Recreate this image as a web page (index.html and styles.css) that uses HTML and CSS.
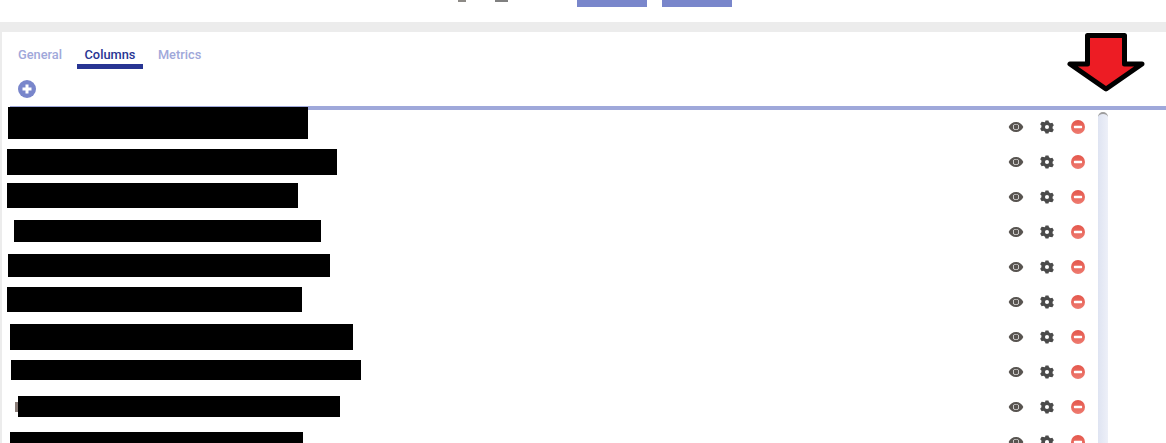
FILE: index.html
```html
<!DOCTYPE html>
<html lang="en">
	<head>
		<meta name="viewport" content="width=device-width, initial-scale=1.0" />
		<title>Columns</title>
		<link rel="stylesheet" href="styles.css">
	</head>
	<body>
		<svg class="defs" aria-hidden="true">
			<symbol id="icon-eye" viewBox="0 0 24 24">
				<path fill-rule="evenodd" d="M12 4.500C7 4.500 2.730 7.610 1 12c1.730 4.390 6 7.500 11 7.500s9.270-3.110 11-7.500c-1.730-4.390-6-7.500-11-7.500zM12 7.400a4.600 4.600 0 1 0 0 9.200 4.600 4.600 0 0 0 0-9.200zM12 8.300a3.700 3.700 0 1 1 0 7.400 3.700 3.700 0 0 1 0-7.400z" />
			</symbol>
			<symbol id="icon-cog" viewBox="0 0 24 24">
				<path fill-rule="evenodd" d="M9.500 1h5l1 3 2.600 1.500 3.100-.7 2.500 4.400-2.100 2.300v3l2.100 2.300-2.500 4.400-3.100-.7L15.500 20l-1 3h-5l-1-3-2.600-1.500-3.100.7-2.500-4.400 2.100-2.300v-3L.3 7.200l2.500-4.400 3.100.7L8.500 4zM12 8.500a3.500 3.500 0 1 0 0 7 3.500 3.500 0 0 0 0-7z" />
			</symbol>
			<linearGradient id="remove-fill" x1="0" y1="0" x2="0" y2="1">
				<stop offset="0" stop-color="#e4574c" />
				<stop offset="1" stop-color="#ee7b70" />
			</linearGradient>
			<symbol id="icon-remove" viewBox="0 0 24 24">
				<circle cx="12" cy="12" r="12" fill="url(#remove-fill)" />
				<rect x="5" y="10" width="14" height="4" rx="1" fill="#fff" />
			</symbol>
		</svg>

		<header class="topbar">
			<span class="stub -dot"></span>
			<span class="stub -square"></span>
			<span class="stub -button"></span>
			<span class="stub -button"></span>
		</header>

		<main class="panel">
			<nav class="tabs">
				<a class="tab">General</a>
				<a class="tab -active">Columns</a>
				<a class="tab">Metrics</a>
			</nav>

			<button type="button" class="add-button" aria-label="Add column">
				<svg viewBox="0 0 18 18" width="18" height="18">
					<circle cx="9" cy="9" r="9" fill="#7986cb" />
					<path d="M9 4.500v9M4.500 9h9" stroke="#fff" stroke-width="3" />
				</svg>
			</button>

			<section class="list">
				<div class="rows">
					<div class="row">
						<span class="redacted bar-1"></span>
						<span class="actions">
							<svg class="icon -eye"><use href="#icon-eye" /></svg>
							<svg class="icon -cog"><use href="#icon-cog" /></svg>
							<svg class="icon -remove"><use href="#icon-remove" /></svg>
						</span>
					</div>
					<div class="row">
						<span class="redacted bar-2"></span>
						<span class="actions">
							<svg class="icon -eye"><use href="#icon-eye" /></svg>
							<svg class="icon -cog"><use href="#icon-cog" /></svg>
							<svg class="icon -remove"><use href="#icon-remove" /></svg>
						</span>
					</div>
					<div class="row">
						<span class="redacted bar-3"></span>
						<span class="actions">
							<svg class="icon -eye"><use href="#icon-eye" /></svg>
							<svg class="icon -cog"><use href="#icon-cog" /></svg>
							<svg class="icon -remove"><use href="#icon-remove" /></svg>
						</span>
					</div>
					<div class="row">
						<span class="redacted bar-4"></span>
						<span class="actions">
							<svg class="icon -eye"><use href="#icon-eye" /></svg>
							<svg class="icon -cog"><use href="#icon-cog" /></svg>
							<svg class="icon -remove"><use href="#icon-remove" /></svg>
						</span>
					</div>
					<div class="row">
						<span class="redacted bar-5"></span>
						<span class="actions">
							<svg class="icon -eye"><use href="#icon-eye" /></svg>
							<svg class="icon -cog"><use href="#icon-cog" /></svg>
							<svg class="icon -remove"><use href="#icon-remove" /></svg>
						</span>
					</div>
					<div class="row">
						<span class="redacted bar-6"></span>
						<span class="actions">
							<svg class="icon -eye"><use href="#icon-eye" /></svg>
							<svg class="icon -cog"><use href="#icon-cog" /></svg>
							<svg class="icon -remove"><use href="#icon-remove" /></svg>
						</span>
					</div>
					<div class="row">
						<span class="redacted bar-7"></span>
						<span class="actions">
							<svg class="icon -eye"><use href="#icon-eye" /></svg>
							<svg class="icon -cog"><use href="#icon-cog" /></svg>
							<svg class="icon -remove"><use href="#icon-remove" /></svg>
						</span>
					</div>
					<div class="row">
						<span class="redacted bar-8"></span>
						<span class="actions">
							<svg class="icon -eye"><use href="#icon-eye" /></svg>
							<svg class="icon -cog"><use href="#icon-cog" /></svg>
							<svg class="icon -remove"><use href="#icon-remove" /></svg>
						</span>
					</div>
					<div class="row">
						<span class="handle"></span>
						<span class="redacted bar-9"></span>
						<span class="actions">
							<svg class="icon -eye"><use href="#icon-eye" /></svg>
							<svg class="icon -cog"><use href="#icon-cog" /></svg>
							<svg class="icon -remove"><use href="#icon-remove" /></svg>
						</span>
					</div>
					<div class="row">
						<span class="redacted bar-10"></span>
						<span class="actions">
							<svg class="icon -eye"><use href="#icon-eye" /></svg>
							<svg class="icon -cog"><use href="#icon-cog" /></svg>
							<svg class="icon -remove"><use href="#icon-remove" /></svg>
						</span>
					</div>
				</div>
				<div class="scrollbar"></div>
			</section>

			<svg class="arrow" viewBox="0 0 84 66" width="84" height="66" aria-hidden="true">
				<path d="M22.500 2.500h37V31H77L41 56 5 31h17.500z" fill="#ed1c24" stroke="#000" stroke-width="5" stroke-linejoin="round" />
			</svg>
		</main>
	</body>
</html>
```

FILE: styles.css
```css
html,
body {
	height: 100%;
	margin: 0;
	overflow: hidden;
}

body {
	display: flex;
	flex-direction: column;
	background-color: #fff;
	font-family: Roboto, "Liberation Sans", sans-serif;
}

.defs {
	position: absolute;
	width: 0;
	height: 0;
}

/* what is left of the toolbar above the panel */
.topbar {
	display: flex;
	flex: none;
	align-items: flex-start;
	height: 22px;
	padding-left: 458px;
}

.stub {
	display: block;
}
.stub.-dot {
	width: 8px;
	height: 2px;
	background-color: #8d8a86;
}
.stub.-square {
	width: 13px;
	height: 2px;
	margin-left: 29px;
	margin-right: 69px;
	background-color: #808080;
}
.stub.-button {
	width: 70px;
	height: 7px;
	margin-right: 15px;
	background-color: #7986cb;
}

.panel {
	position: relative;
	flex: 1;
	min-height: 0;
	border-top: 10px solid #ececec;
	border-left: 2px solid #ececec;
	overflow: hidden;
}

.tabs {
	display: flex;
	gap: 6.5px;
	height: 37px;
	padding-left: 8px;
}

.tab {
	height: 32px;
	padding: 14px 8px 0;
	box-sizing: border-box;
	color: #9fa8da;
	font-size: 12.8px;
	font-weight: 500;
	line-height: 17px;
}
.tab.-active {
	height: 37px;
	border-bottom: 5px solid #283593;
	color: #283593;
}

.add-button {
	display: block;
	width: 18px;
	height: 18px;
	margin: 11px 0 0 16px;
	padding: 0;
	border: none;
	background: none;
}
.add-button svg {
	display: block;
}

.list {
	display: flex;
	margin: 8px 0 0 8px;
	border-top: 4px solid #9fa8da;
	padding-right: 58px;
}

.rows {
	flex: 1;
	min-width: 0;
	margin-left: -8px;
}

.row {
	display: flex;
	align-items: flex-start;
	height: 35px;
}

.redacted {
	display: block;
	flex: none;
	background-color: #000;
}
/* every bar was blacked out by hand, so each has its own box */
.bar-1 { width: 300px; height: 32px; margin: -3px 0 0 6px; }
.bar-2 { width: 330px; height: 26px; margin: 4px 0 0 5px; }
.bar-3 { width: 291px; height: 25px; margin: 3px 0 0 5px; }
.bar-4 { width: 307px; height: 22px; margin: 5px 0 0 12px; }
.bar-5 { width: 322px; height: 23px; margin: 4px 0 0 6px; }
.bar-6 { width: 295px; height: 25px; margin: 2px 0 0 5px; }
.bar-7 { width: 343px; height: 26px; margin: 4px 0 0 8px; }
.bar-8 { width: 350px; height: 20px; margin: 5px 0 0 9px; }
.bar-9 { width: 322px; height: 21px; margin: 6px 0 0 0; }
.bar-10 { width: 293px; height: 11px; margin: 7px 0 0 8px; }

.handle {
	display: block;
	flex: none;
	width: 3px;
	height: 10px;
	margin: 12px 0 0 13px;
	background-color: #8a7d78;
}

.actions {
	display: flex;
	align-items: center;
	height: 33px;
	margin-left: auto;
	margin-right: 13px;
}

.icon {
	display: block;
}
.icon.-eye {
	width: 16px;
	height: 16px;
	fill: #585450;
}
.icon.-cog {
	width: 14px;
	height: 14px;
	margin-left: 16px;
	fill: #4a4a4a;
}
.icon.-remove {
	width: 14px;
	height: 14px;
	margin-left: 17px;
}

.scrollbar {
	flex: none;
	width: 10px;
	height: 400px;
	margin-top: 2px;
	box-sizing: border-box;
	border-radius: 5px 5px 0 0;
	border-top: 2px solid #9e9e9e;
	background: linear-gradient(to right, #dfe4f2, #edf0f8);
}

.arrow {
	position: absolute;
	top: 1px;
	left: 1063px;
}
```
